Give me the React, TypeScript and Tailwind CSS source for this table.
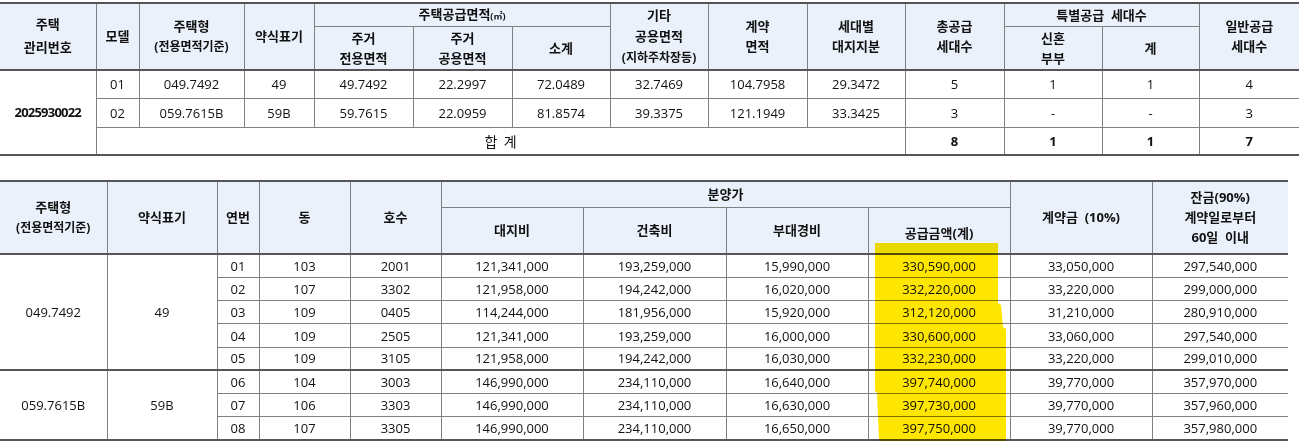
import React from 'react';

const hd =
  'bg-[#eaf1fb] border border-[#808080] font-bold text-[13px] text-[#111] text-center align-middle leading-[20px] p-0';
const td = 'border border-[#808080] text-[13px] text-[#111] text-center align-middle leading-[18px] p-0';
const thickB = ' border-b-2 border-b-[#555]';

const models = [
  ['01', '049.7492', '49', '49.7492', '22.2997', '72.0489', '32.7469', '104.7958', '29.3472', '5', '1', '1', '4'],
  ['02', '059.7615B', '59B', '59.7615', '22.0959', '81.8574', '39.3375', '121.1949', '33.3425', '3', '-', '-', '3'],
];

const units = [
  ['01', '103', '2001', '121,341,000', '193,259,000', '15,990,000', '330,590,000', '33,050,000', '297,540,000'],
  ['02', '107', '3302', '121,958,000', '194,242,000', '16,020,000', '332,220,000', '33,220,000', '299,000,000'],
  ['03', '109', '0405', '114,244,000', '181,956,000', '15,920,000', '312,120,000', '31,210,000', '280,910,000'],
  ['04', '109', '2505', '121,341,000', '193,259,000', '16,000,000', '330,600,000', '33,060,000', '297,540,000'],
  ['05', '109', '3105', '121,958,000', '194,242,000', '16,030,000', '332,230,000', '33,220,000', '299,010,000'],
  ['06', '104', '3003', '146,990,000', '234,110,000', '16,640,000', '397,740,000', '39,770,000', '357,970,000'],
  ['07', '106', '3303', '146,990,000', '234,110,000', '16,630,000', '397,730,000', '39,770,000', '357,960,000'],
  ['08', '107', '3305', '146,990,000', '234,110,000', '16,650,000', '397,750,000', '39,770,000', '357,980,000'],
];
const unitHeights = ['h-[24px]', 'h-[23px]', 'h-[23px]', 'h-[24px]', 'h-[22px]', 'h-[24px]', 'h-[23px]', 'h-[23px]'];

const topCols = [96, 43, 105, 70, 99, 99, 98, 98, 99, 98, 99, 98, 97, 100];
const botCols = [107, 110, 42, 91, 91, 142, 143, 142, 142, 142, 136];

const App: React.FC = () => {
  return (
    <div className="relative w-[1306px] h-[448px] bg-white font-['Open_Sans','Noto_Sans_CJK_KR',sans-serif]">
      <div className="pt-[2px]">
        <table className="table-fixed border-collapse w-[1299px] border-t-2 border-t-[#555]">
          <colgroup>
            {topCols.map((w, i) => (
              <col key={i} style={{ width: w }} />
            ))}
          </colgroup>
          <thead>
            <tr className="h-[21px]">
              <th rowSpan={2} className={hd + thickB + ' border-l-0 leading-[23px]'}>
                주택
                <br />
                관리번호
              </th>
              <th rowSpan={2} className={hd + thickB}>모델</th>
              <th rowSpan={2} className={hd + thickB}>
                주택형
                <br />
                <span className="text-[12px]">(전용면적기준)</span>
              </th>
              <th rowSpan={2} className={hd + thickB}>약식표기</th>
              <th colSpan={3} className={hd}>
                주택공급면적<span className="text-[9px]">(㎡)</span>
              </th>
              <th rowSpan={2} className={hd + thickB + ' leading-[21px]'}>
                기타
                <br />
                공용면적
                <br />
                <span className="text-[12px]">(지하주차장등)</span>
              </th>
              <th rowSpan={2} className={hd + thickB}>
                계약
                <br />
                면적
              </th>
              <th rowSpan={2} className={hd + thickB}>
                세대별
                <br />
                대지지분
              </th>
              <th rowSpan={2} className={hd + thickB}>
                총공급
                <br />
                세대수
              </th>
              <th colSpan={2} className={hd}>특별공급&nbsp;&nbsp;세대수</th>
              <th rowSpan={2} className={hd + thickB + ' border-r-0'}>
                일반공급
                <br />
                세대수
              </th>
            </tr>
            <tr className="h-[43px]">
              <th className={hd + thickB}>
                주거
                <br />
                전용면적
              </th>
              <th className={hd + thickB}>
                주거
                <br />
                공용면적
              </th>
              <th className={hd + thickB}>소계</th>
              <th className={hd + thickB}>
                신혼
                <br />
                부부
              </th>
              <th className={hd + thickB}>계</th>
            </tr>
          </thead>
          <tbody>
            {models.map((m, r) => (
              <tr key={r} className="h-[29px]">
                {r === 0 && (
                  <td rowSpan={3} className={td + thickB + ' border-l-0 font-bold tracking-[-0.06em]'}>
                    2025930022
                  </td>
                )}
                {m.map((v, i) => (
                  <td key={i} className={td + (i === m.length - 1 ? ' border-r-0' : '')}>
                    {v}
                  </td>
                ))}
              </tr>
            ))}
            <tr className="h-[27px]">
              <td colSpan={9} className={td + thickB + " font-['Noto_Sans_CJK_KR',sans-serif] text-[14px]"}>
                합&nbsp;&nbsp;계
              </td>
              <td className={td + thickB + ' font-bold'}>8</td>
              <td className={td + thickB + ' font-bold'}>1</td>
              <td className={td + thickB + ' font-bold'}>1</td>
              <td className={td + thickB + ' font-bold border-r-0'}>7</td>
            </tr>
          </tbody>
        </table>
      </div>

      <div className="mt-[24px]">
        <table className="table-fixed border-collapse w-[1288px] border-t-2 border-t-[#555]">
          <colgroup>
            {botCols.map((w, i) => (
              <col key={i} style={{ width: w }} />
            ))}
          </colgroup>
          <thead>
            <tr className="h-[27px]">
              <th rowSpan={2} className={hd + thickB + ' border-l-0 leading-[18px]'}>
                주택형
                <br />
                <span className="text-[12px]">(전용면적기준)</span>
              </th>
              <th rowSpan={2} className={hd + thickB}>약식표기</th>
              <th rowSpan={2} className={hd + thickB}>연번</th>
              <th rowSpan={2} className={hd + thickB}>동</th>
              <th rowSpan={2} className={hd + thickB}>호수</th>
              <th colSpan={4} className={hd + ' text-[12px]'}>분양가</th>
              <th rowSpan={2} className={hd + thickB}>계약금&nbsp;&nbsp;(10%)</th>
              <th rowSpan={2} className={hd + thickB + ' border-r-0 leading-[20.5px]'}>
                잔금(90%)
                <br />
                계약일로부터
                <br />
                60일&nbsp;&nbsp;이내
              </th>
            </tr>
            <tr className="h-[46px]">
              <th className={hd + thickB}>대지비</th>
              <th className={hd + thickB}>건축비</th>
              <th className={hd + thickB}>부대경비</th>
              <th className={hd + thickB + ' text-[12px] pt-[6px]'}>공급금액(계)</th>
            </tr>
          </thead>
          <tbody>
            {units.map((u, r) => {
              const sep = r === 4 || r === 7 ? thickB : '';
              return (
                <tr key={r} className={unitHeights[r]}>
                  {r === 0 && (
                    <>
                      <td rowSpan={5} className={td + thickB + ' border-l-0'}>049.7492</td>
                      <td rowSpan={5} className={td + thickB}>49</td>
                    </>
                  )}
                  {r === 5 && (
                    <>
                      <td rowSpan={3} className={td + thickB + ' border-l-0'}>059.7615B</td>
                      <td rowSpan={3} className={td + thickB}>59B</td>
                    </>
                  )}
                  {u.map((v, i) => (
                    <td key={i} className={td + sep + (i === u.length - 1 ? ' border-r-0' : '')}>
                      {v}
                    </td>
                  ))}
                </tr>
              );
            })}
          </tbody>
        </table>
      </div>

      {/* highlighter stroke over 공급금액 column */}
      <div className="absolute left-[875px] top-[243px] w-[131px] h-[198px] bg-[#ffe600] mix-blend-multiply [clip-path:polygon(0_0,123px_0,123px_60px,126px_62px,128px_84px,131px_86px,131px_198px,4px_198px,2px_150px,0_148px)]" />
    </div>
  );
};

export default App;
